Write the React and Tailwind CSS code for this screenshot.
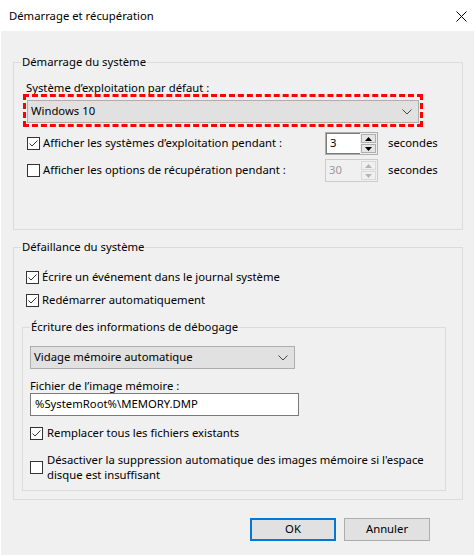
import React from "react";

const font = { fontFamily: '"Noto Sans", "Open Sans", sans-serif' };

function Check({ checked }) {
  return (
    <svg width="13" height="13" viewBox="0 0 13 13" className="shrink-0">
      <rect x="0.5" y="0.5" width="12" height="12" fill="#fff" stroke="#333" />
      {checked && (
        <polyline points="2.5,6.5 5,9 10.5,3.5" fill="none" stroke="#333" strokeWidth="1" />
      )}
    </svg>
  );
}

function Chevron({ color = "#444" }) {
  return (
    <svg width="10" height="6" viewBox="0 0 10 6">
      <polyline points="0.5,0.5 5,5 9.5,0.5" fill="none" stroke={color} strokeWidth="1" />
    </svg>
  );
}

function Spin({ value, disabled }) {
  const tri = disabled ? "#b5b5b5" : "#000";
  return (
    <div className={`flex h-[23px] w-[53px] border ${disabled ? "border-[#cccccc] bg-[#f0f0f0]" : "border-[#adadad] bg-white"}`}>
      <div className={`flex-1 flex items-center pl-[3px] ${disabled ? "text-[#9a9a9a]" : "text-black border border-[#7a7a7a] border-r-0"}`}>
        {value}
      </div>
      <div className="w-[17px] flex flex-col gap-[1px] p-[1px] bg-[#f0f0f0]">
        <div className={`flex-1 flex items-center justify-center border ${disabled ? "border-[#d9d9d9] bg-[#f0f0f0]" : "border-[#adadad] bg-[#e5e5e5]"}`}>
          <svg width="7" height="4" viewBox="0 0 7 4"><polygon points="0,4 7,4 3.5,0" fill={tri} /></svg>
        </div>
        <div className={`flex-1 flex items-center justify-center border ${disabled ? "border-[#d9d9d9] bg-[#f0f0f0]" : "border-[#adadad] bg-[#e5e5e5]"}`}>
          <svg width="7" height="4" viewBox="0 0 7 4"><polygon points="0,0 7,0 3.5,4" fill={tri} /></svg>
        </div>
      </div>
    </div>
  );
}

export default function App() {
  return (
    <div className="w-[476px] h-[557px] bg-white overflow-hidden text-[11.3px] text-black" style={font}>
      <div className="mt-[3px] ml-[1px] w-[473px] h-[552px] bg-[#f0f0f0] flex flex-col">
        <div className="h-[28px] bg-white flex items-center justify-between pl-[8px] pr-[7px]">
          <span className="leading-[16px] mt-[-2px]">Démarrage et récupération</span>
          <svg width="11" height="11" viewBox="0 0 11 11" className="mt-[-1px]">
            <path d="M0.5 0.5 L10.5 10.5 M10.5 0.5 L0.5 10.5" stroke="#000" strokeWidth="1" />
          </svg>
        </div>

        <div className="pl-[12px] pr-[11px] pt-[23px]">
          <fieldset className="border border-[#dcdcdc] pb-[47px]">
            <legend className="ml-[7px] px-[1px] leading-[16px]">Démarrage du système</legend>
            <div className="pl-[12px] pt-[10px] leading-[16px]">Système d’exploitation par défaut :</div>
            <div className="relative ml-[13px] mr-[43px] mt-[4px]">
              <div className="h-[23px] border border-[#adadad] bg-[#e1e1e1] flex items-center justify-between pl-[3px] pr-[6px]">
                <span>Windows 10</span>
                <Chevron />
              </div>
              <div className="absolute left-[-4px] right-[-4px] top-[-6px] bottom-[-4px] border-[3px] border-dashed border-[#ff0000]"></div>
            </div>
            <div className="flex items-center ml-[13px] mt-[9px]">
              <div className="w-[298px] flex items-center gap-[3px]">
                <Check checked />
                <span>Afficher les systèmes d’exploitation pendant :</span>
              </div>
              <Spin value="3" />
              <span className="ml-[10px]">secondes</span>
            </div>
            <div className="flex items-center ml-[13px] mt-[4px]">
              <div className="w-[298px] flex items-center gap-[3px]">
                <Check />
                <span>Afficher les options de récupération pendant :</span>
              </div>
              <Spin value="30" disabled />
              <span className="ml-[10px]">secondes</span>
            </div>
          </fieldset>

          <fieldset className="border border-[#dcdcdc] mt-[9px] pb-[8px]">
            <legend className="ml-[7px] px-[1px] leading-[16px]">Défaillance du système</legend>
            <div className="flex items-center gap-[3px] ml-[12px] mt-[14px] leading-[16px]">
              <Check checked />
              <span>Écrire un événement dans le journal système</span>
            </div>
            <div className="flex items-center gap-[3px] ml-[12px] mt-[7px] leading-[16px]">
              <Check checked />
              <span>Redémarrer automatiquement</span>
            </div>

            <fieldset className="border border-[#dcdcdc] ml-[8px] mr-[16px] mt-[11px] pb-[8px]">
              <legend className="ml-[7px] px-[1px] leading-[16px]">Écriture des informations de débogage</legend>
              <div className="ml-[7px] mt-[11px] w-[265px] h-[23px] border border-[#adadad] bg-[#e1e1e1] flex items-center justify-between pl-[3px] pr-[6px]">
                <span>Vidage mémoire automatique</span>
                <Chevron />
              </div>
              <div className="ml-[7px] mt-[9px] leading-[15px]">Fichier de l’image mémoire :</div>
              <div className="ml-[7px] w-[269px] h-[23px] border border-[#7a7a7a] bg-white flex items-center pl-[4px]">
                %SystemRoot%\MEMORY.DMP
              </div>
              <div className="flex items-center gap-[4px] ml-[7px] mt-[9px] leading-[16px]">
                <Check checked />
                <span>Remplacer tous les fichiers existants</span>
              </div>
              <div className="flex items-center gap-[4px] ml-[7px] mt-[11px] leading-[15px]">
                <Check />
                <span className="whitespace-nowrap">
                  Désactiver la suppression automatique des images mémoire si l'espace
                  <br />
                  disque est insuffisant
                </span>
              </div>
            </fieldset>
          </fieldset>

          <div className="flex justify-end gap-[8px] mt-[18px] mr-[33px]">
            <button className="w-[86px] h-[23px] border-2 border-[#0078d7] bg-[#e1e1e1] flex items-center justify-center">OK</button>
            <button className="w-[86px] h-[23px] border border-[#adadad] bg-[#e1e1e1] flex items-center justify-center">Annuler</button>
          </div>
        </div>
      </div>
    </div>
  );
}
